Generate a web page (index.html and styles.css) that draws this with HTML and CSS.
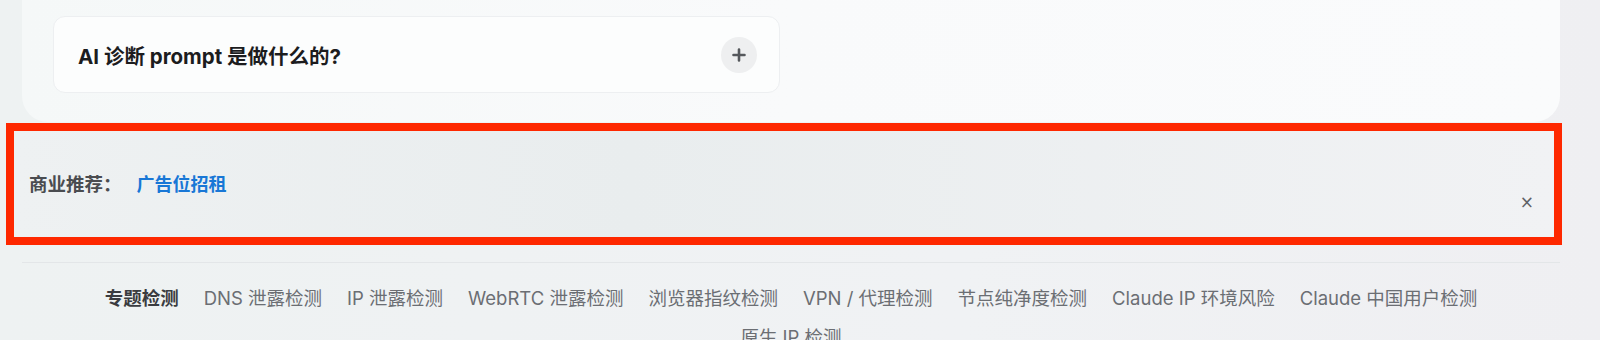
FILE: index.html
```html
<!DOCTYPE html>
<html lang="zh-CN">
<head>
  <meta charset="UTF-8">
  <meta name="viewport" content="width=device-width, initial-scale=1.0">
  <title>AI 诊断 FAQ</title>
  <link rel="stylesheet" href="styles.css">
</head>
<body>
  <div class="panel">
    <div class="faq-item">
      <h3>AI 诊断 prompt 是做什么的?</h3>
      <button class="faq-toggle" aria-label="展开">
        <svg width="14" height="14" viewBox="0 0 14 14"><path d="M7 1.5v11M1.5 7h11" stroke="#55585c" stroke-width="2.6" stroke-linecap="round"/></svg>
      </button>
    </div>
  </div>

  <div class="ad-bar">
    <span class="ad-label">商业推荐：</span>
    <a class="ad-link" href="#">广告位招租</a>
    <button class="ad-close" aria-label="关闭">×</button>
  </div>

  <div class="footer">
    <nav class="topic-links">
      <span class="topic-title">专题检测</span>
      <a href="#">DNS 泄露检测</a>
      <a href="#">IP 泄露检测</a>
      <a href="#">WebRTC 泄露检测</a>
      <a href="#">浏览器指纹检测</a>
      <a href="#">VPN / 代理检测</a>
      <a href="#">节点纯净度检测</a>
      <a href="#">Claude IP 环境风险</a>
      <a href="#">Claude 中国用户检测</a>
      <a href="#">原生 IP 检测</a>
    </nav>
  </div>
</body>
</html>
```

FILE: styles.css
```css
body {
  font-family: Inter, "Noto Sans CJK SC", sans-serif;
  background: linear-gradient(90deg, #eef2f2, #f0f2f4 60%, #efeff2);
  margin: 0;
  height: 340px;
  overflow: hidden;
}

.panel {
  margin: 0 40px 0 22px;
  padding: 16px 31px 29px;
  background: linear-gradient(90deg, #f5f8f8, #f9fafb 50%, #fafbfc);
  border-radius: 0 0 26px 26px;
}

.faq-item {
  width: 727px;
  height: 77px;
  box-sizing: border-box;
  padding: 0 22px 0 24px;
  display: flex;
  align-items: center;
  justify-content: space-between;
  background-color: #fcfdfd;
  border: 1px solid #edeff1;
  border-radius: 12px;
}

.faq-item h3 {
  margin: 0;
  font-size: 20.5px;
  font-weight: 700;
  color: #1c1c1e;
}

.faq-toggle {
  width: 36px;
  height: 36px;
  border: none;
  border-radius: 50%;
  background-color: #eeeff0;
  display: flex;
  align-items: center;
  justify-content: center;
  padding: 0;
}

.ad-bar {
  position: relative;
  margin: 1px 0 0 6px;
  width: 1556px;
  height: 122px;
  box-sizing: border-box;
  border: 8px solid #fe2800;
  padding: 0 15px 3px;
  display: flex;
  align-items: center;
  background: linear-gradient(90deg, #eef1f2, #e9edee 40%, #f1f2f4);
}

.ad-label {
  font-size: 18.5px;
  font-weight: 600;
  color: #4a4c50;
}

.ad-link {
  margin-left: 15px;
  font-size: 18px;
  font-weight: 600;
  color: #1877d6;
  text-decoration: none;
}

.ad-close {
  position: absolute;
  right: 20px;
  bottom: 25px;
  border: none;
  background: none;
  padding: 0;
  font-family: "DejaVu Sans", sans-serif;
  font-size: 17px;
  line-height: 20px;
  color: #5f6266;
}

.footer {
  margin: 17px 40px 0 22px;
  border-top: 1px solid #e3e6e8;
  padding-top: 22px;
}

.topic-links {
  max-width: 1420px;
  margin: 0 auto;
  display: flex;
  flex-wrap: wrap;
  justify-content: center;
  column-gap: 25px;
  row-gap: 13px;
  font-size: 18.5px;
  line-height: 26px;
}

.topic-links a {
  color: #6b6e73;
  text-decoration: none;
}

.topic-title {
  font-weight: 700;
  color: #3a3c40;
}
```
